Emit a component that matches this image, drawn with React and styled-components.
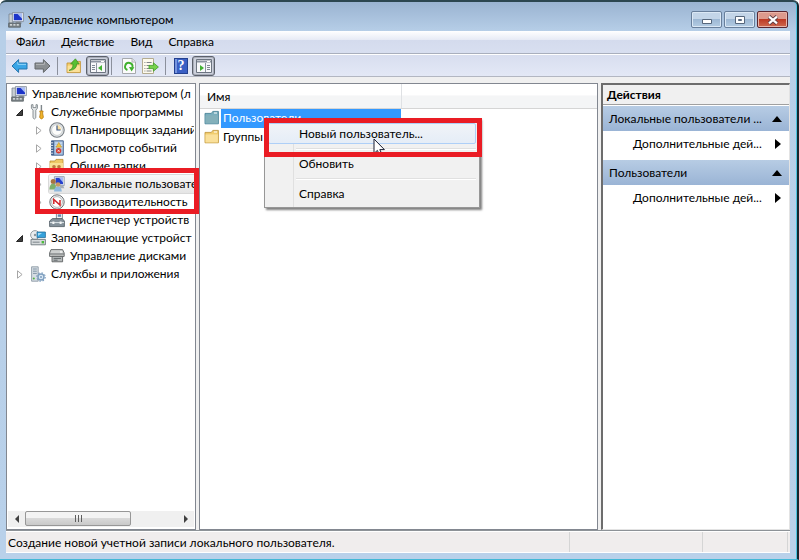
import { useState } from "react";
import styled, { createGlobalStyle, css } from "styled-components";

const ComputerIcon = () => (
	<svg width="16" height="16" viewBox="0 0 16 16">
		<path d="M1 2h4v9H1z" fill="#c9cfd4" stroke="#6f7a84" strokeWidth=".7" />
		<path d="M4.4.6h11v9h-11z" fill="#e6ebf2" stroke="#7c8793" strokeWidth=".8" />
		<path d="M5.8 1.8h8.2v6.4H5.8z" fill="#1d35c9" />
		<path d="M9.4 1.8H14v5z" fill="#a9bdf6" />
		<path d="M8 9.8h5l1 1.6H7z" fill="#8b949c" />
		<path d="M.6 11.2h11.8v4H.6z" fill="#7d8589" stroke="#4c5357" strokeWidth=".7" />
		<path d="M2 12.8h2M5.4 12.8h2M8.8 12.8h2" stroke="#e9eef0" strokeWidth="1.2" />
	</svg>
);

const ToolsIcon = () => (
	<svg width="16" height="16" viewBox="0 0 16 16">
		<path
			d="M1.4.8v3.4L3 6.2v7.6q1.4 2.4 2.8 0V6.2l1.6-2V.8L6 .6v3H3V.6z"
			fill="#e4e8ea"
			stroke="#7f878b"
			strokeWidth=".9"
		/>
		<path d="M11.4 1v6" stroke="#7f878b" strokeWidth="1.4" />
		<path d="M9.7 7h3.4l-.5 2 .8 4.4q-1.9 3-3.8 0l.8-4.4z" fill="#f0b429" stroke="#b57a10" strokeWidth=".8" />
	</svg>
);

const ClockIcon = () => (
	<svg width="16" height="16" viewBox="0 0 16 16">
		<circle cx="8" cy="8" r="7.2" fill="#e6e9eb" stroke="#777d82" strokeWidth="1.1" />
		<circle cx="8" cy="8" r="5.4" fill="#fdfdfb" stroke="#b9bec2" strokeWidth=".7" />
		<path d="M8 3v5h4V8A4.6 4.6 0 0 0 8 3z" fill="#f7dda2" />
		<path d="M8 3.4V8h3.6" fill="none" stroke="#3f5a86" strokeWidth="1.2" />
	</svg>
);

const EventIcon = () => (
	<svg width="16" height="16" viewBox="0 0 16 16">
		<path d="M2.5.8h11.8v14.4H2.5z" fill="#a8c4e4" stroke="#4c6791" strokeWidth="1" />
		<path d="M2.6 1h2.6v14H2.6z" fill="#42618f" />
		<path d="M1.2 2.8h3M1.2 5.4h3M1.2 8h3M1.2 10.6h3M1.2 13.2h3" stroke="#dde5ee" strokeWidth="1" />
		<path d="M6.2 3h7M6.2 5.4h7M6.2 7.8h7" stroke="#d9e5f2" strokeWidth="1" />
		<path d="m9.8 2.4 2.8 4.8H7z" fill="#f5c43c" stroke="#b98718" strokeWidth=".5" />
		<circle cx="9.6" cy="10.8" r="2.7" fill="#d5382d" />
		<path d="m8.6 9.8 2 2m0-2-2 2" stroke="#fff" strokeWidth=".8" />
	</svg>
);

const SharedIcon = () => (
	<svg width="16" height="16" viewBox="0 0 16 16">
		<path d="M1 3h5l1-1.6h7V13H1z" fill="#eec765" stroke="#ba8d32" strokeWidth=".8" />
		<path d="M1 5h13v8H1z" fill="#f8df94" />
		<circle cx="5" cy="8.8" r="1.8" fill="#b9793f" />
		<circle cx="10" cy="8.8" r="1.8" fill="#b9793f" />
		<path d="M2 14.6q3-6 6 0zM7 14.6q3-6 6 0z" fill="#4f9b51" />
	</svg>
);

const UsersIcon = () => (
	<svg width="16" height="16" viewBox="0 0 16 16">
		<path d="M5.4.6h9.8v9H5.4z" fill="#e6ebf2" stroke="#8793a4" strokeWidth=".8" />
		<path d="M6.6 1.8H14v6.4H6.6z" fill="#2440cc" />
		<path d="M10 1.8h4v4.6z" fill="#a5b8f4" />
		<path d="M10.4 9.8h3.8l1.2 2.4h-4z" fill="#a6adb6" />
		<circle cx="4.2" cy="5.4" r="2.5" fill="#a87440" />
		<path d="M.4 13.4q.2-5.8 3.8-5.6 3 0 3 5.6z" fill="#7db06a" />
		<circle cx="9" cy="8.6" r="2.4" fill="#c99a62" />
		<path d="M5 15.4q.4-5 4-4.8 3.4 0 3.8 4.8z" fill="#8fb8dc" />
	</svg>
);

const PerfIcon = () => (
	<svg width="16" height="16" viewBox="0 0 16 16">
		<circle cx="8" cy="8" r="7.2" fill="#f2f2f2" stroke="#6d7175" strokeWidth="1" />
		<circle cx="8" cy="8" r="5.4" fill="#fff" stroke="#9ba0a4" strokeWidth=".7" />
		<path d="M4.8 10V5.4L11 11V6" fill="none" stroke="#d3262b" strokeWidth="1.5" />
	</svg>
);

const DeviceIcon = () => (
	<svg width="16" height="16" viewBox="0 0 16 16">
		<path d="M7.4 1h6v6h-6z" fill="#eef1f3" stroke="#77838c" strokeWidth=".9" />
		<path d="M8.8 2.4H12v2.4H8.8z" fill="#6389b0" />
		<path d="M3.4 6.6h9.8L15.4 9v5.6H.6V9z" fill="#84919a" stroke="#4d5961" strokeWidth=".8" />
		<path d="M1 10.6h14" stroke="#dbe3e6" strokeWidth="1" />
		<path d="M3.4 9.6h2v2.4h-2zM10.6 9.6h2v2.4h-2z" fill="#f3f5f5" />
	</svg>
);

const StorageIcon = () => (
	<svg width="16" height="16" viewBox="0 0 16 16">
		<circle cx="5" cy="5" r="4.4" fill="#e9ecee" stroke="#8c959b" strokeWidth=".9" />
		<circle cx="5" cy="5" r="1.2" fill="#8b959c" />
		<path d="M7 2h8.4v5.6H7z" fill="#35a2dc" stroke="#266f9a" strokeWidth=".8" />
		<path d="M8 3h4L8 6z" fill="#a4dcf7" />
		<path d="M1 9.4h14.4v5.4H1z" fill="#d6dadc" stroke="#6d777d" strokeWidth=".9" />
		<path d="M2.6 12.2h7" stroke="#8b9398" strokeWidth="1.2" />
		<path d="M11.6 11h2.4v2.4h-2.4z" fill="#4cbb3c" />
	</svg>
);

const DiskIcon = () => (
	<svg width="16" height="16" viewBox="0 0 16 16">
		<path d="M2 1.6h11.6L15.2 5v3.4H.6V5z" fill="#cdd0cf" stroke="#5d6263" strokeWidth=".9" />
		<path d="M1 6h14" stroke="#666b6c" strokeWidth="1" />
		<path d="M3 8.4h10.6v5.4H3z" fill="#b6babb" stroke="#5d6263" strokeWidth=".9" />
		<path d="M4.6 10.4h7.4M4.6 12.2h4" stroke="#62686a" strokeWidth="1" />
		<path d="M11 4h2.2" stroke="#fff" strokeWidth="1.2" />
	</svg>
);

const ServicesIcon = () => (
	<svg width="16" height="16" viewBox="0 0 16 16">
		<path d="M1.6.8h6.6v14.4H1.6z" fill="#d6dde3" stroke="#8c9aa6" strokeWidth=".9" />
		<path d="M3 3h3.8M3 5.2h3.8M3 7.4h3.8" stroke="#8295a6" strokeWidth="1" />
		<circle cx="3.8" cy="12.6" r="1" fill="#4fb13e" />
		<circle cx="11" cy="11" r="3" fill="#dbe8f4" stroke="#7f9fbf" strokeWidth="1.4" />
		<circle cx="11" cy="11" r="4.2" fill="none" stroke="#7f9fbf" strokeWidth="1.2" strokeDasharray="1.5 1.8" />
		<circle cx="11" cy="11" r="1" fill="#7f9fbf" />
	</svg>
);

const FolderIcon = ({ selected }) => (
	<svg width="16" height="16" viewBox="0 0 16 16">
		<path
			d="M1 3.4h6.4l1.4-2h5.6v12.4H1z"
			fill={selected ? "#79aebd" : "#f1cc6d"}
			stroke={selected ? "#4a8499" : "#c39a42"}
			strokeWidth=".9"
		/>
		<path d="M1.5 5.4h12.4v8H1.5z" fill={selected ? "#83b0ba" : "#fae09a"} />
		<path d="M10 3h3" stroke="#fff" strokeWidth="1" />
	</svg>
);

const ArrowIcon = ({ forward }) => (
	<svg width="17" height="16" viewBox="0 0 17 16">
		<path
			d={forward ? "M16 8 9.4 1.6V5H1v6h8.4v3.4z" : "M1 8l6.6-6.4V5H16v6H7.6v3.4z"}
			fill={forward ? "#8b8f92" : "#39a5e6"}
			stroke={forward ? "#64686b" : "#2474ad"}
			strokeLinejoin="round"
		/>
		<path d={forward ? "M2 6.4h8.4V4" : "M15 6.4H6.8V4"} fill="none" stroke={forward ? "#b3b6b8" : "#8fd4f8"} />
	</svg>
);

const UpIcon = () => (
	<svg width="16" height="16" viewBox="0 0 16 16">
		<path d="M1 5h5l1-1.6h7.4v11.2H1z" fill="#f3cd6c" stroke="#c4963a" strokeWidth=".9" />
		<path d="M1.6 7.6h12.2V14H1.6z" fill="#fbe098" />
		<path d="M3 12.4Q7.2 11 7 6H4.6L9.4.8l3.8 5.2h-2.6Q10.8 12 3 12.4z" fill="#58c033" stroke="#3b8c21" strokeWidth=".7" />
	</svg>
);

const PaneIcon = ({ right }) => (
	<svg width="16" height="14" viewBox="0 0 16 14">
		<path d="M.5.5h15v13H.5z" fill="#f7f8fa" stroke="#6c7480" />
		<path d="M1 2.5h14" stroke="#8c94a1" strokeWidth="2" />
		<path d="M11 2.5h3" stroke="#fff" />
		<path d={right ? "M9.5 4v9" : "M6.5 4v9"} stroke="#8c94a1" />
		<path d={right ? "M11 6.5h3M11 8.5h3M11 10.5h3" : "M2 6.5h3M2 8.5h3M2 10.5h3"} stroke="#7e8793" />
		<path d={right ? "M4 6v6l4-3z" : "M12 6v6L8 9z"} fill="#42b133" />
	</svg>
);

const RefreshIcon = () => (
	<svg width="14" height="16" viewBox="0 0 14 16">
		<path d="M.5.5h9.6l3.4 3.4v11.6H.5z" fill="#fbfbfb" stroke="#a6a9ad" />
		<path d="M10 .8v3.3h3.2" fill="#e4e5e7" stroke="#a6a9ad" strokeWidth=".8" />
		<path d="M5.4 12A3.7 3.7 0 1 1 10.4 9.4" fill="none" stroke="#3fb02e" strokeWidth="1.9" />
		<path d="m7 9 5.4.2-2.8 4.2z" fill="#3fb02e" />
	</svg>
);

const ExportIcon = () => (
	<svg width="17" height="16" viewBox="0 0 17 16">
		<path d="M.5.5h11v15H.5z" fill="#fdfaec" stroke="#b4ac90" />
		<path d="M2.4 4.5h1M4.6 4.5h5M2.4 7.5h1M4.6 7.5h3M2.4 10.5h1M4.6 10.5h3M2.4 13h1M4.6 13h5" stroke="#80848a" />
		<path d="M7 7.4h4.4V4.8L16.4 9l-5 4.2v-2.6H7z" fill="#77d24b" stroke="#409e28" strokeWidth=".8" />
	</svg>
);

const CursorIcon = () => (
	<svg width="13" height="20" viewBox="0 0 13 20">
		<path d="M1 1v14.4l3.4-3 2.4 5.4 2.4-1-2.4-5.2h4.6z" fill="#fff" stroke="#1a1f33" />
	</svg>
);

const MENU = ["Файл", "Действие", "Вид", "Справка"];

const TREE = [
	{ text: "Управление компьютером (л", level: 0, icon: ComputerIcon },
	{ text: "Служебные программы", level: 1, icon: ToolsIcon, state: "open" },
	{ text: "Планировщик заданий", level: 2, icon: ClockIcon, state: "closed" },
	{ text: "Просмотр событий", level: 2, icon: EventIcon, state: "closed" },
	{ text: "Общие папки", level: 2, icon: SharedIcon, state: "closed" },
	{ text: "Локальные пользовате", level: 2, icon: UsersIcon, state: "closed", active: true },
	{ text: "Производительность", level: 2, icon: PerfIcon, state: "closed" },
	{ text: "Диспетчер устройств", level: 2, icon: DeviceIcon },
	{ text: "Запоминающие устройст", level: 1, icon: StorageIcon, state: "open" },
	{ text: "Управление дисками", level: 2, icon: DiskIcon },
	{ text: "Службы и приложения", level: 1, icon: ServicesIcon, state: "closed" },
];

const ACTIONS = ["Локальные пользователи ...", "Пользователи"];

const App = () => {
	const [selected, setSelected] = useState("Пользователи");

	return (
		<>
			<GlobalStyle />
			<Window>
				<TitleBar>
					<ComputerIcon />
					<Title>Управление компьютером</Title>
					<WinButton aria-label="Свернуть">
						<svg width="12" height="12" viewBox="0 0 12 12">
							<path d="M1.5 5.5h9v4h-9z" fill="#fff" stroke="#56677c" />
						</svg>
					</WinButton>
					<WinButton aria-label="Развернуть">
						<svg width="12" height="12" viewBox="0 0 12 12">
							<path d="M1.5 2.5h9v7h-9z" fill="#fff" stroke="#56677c" />
							<path d="M4.5 5.5h3v1h-3z" fill="#8fa9c6" stroke="#56677c" />
						</svg>
					</WinButton>
					<WinButton $close aria-label="Закрыть">
						<svg width="12" height="12" viewBox="0 0 12 12">
							<path d="m2 2.6 8 6.8m0-6.8L2 9.4" stroke="#5b3a41" strokeWidth="4" />
							<path d="m2 2.6 8 6.8m0-6.8L2 9.4" stroke="#fff" strokeWidth="2.2" />
						</svg>
					</WinButton>
				</TitleBar>

				<Client>
					<MenuBar>
						{MENU.map(item => (
							<MenuButton key={item}>{item}</MenuButton>
						))}
					</MenuBar>

					<ToolBar>
						<Tool aria-label="Назад">
							<ArrowIcon />
						</Tool>
						<Tool aria-label="Вперед">
							<ArrowIcon forward />
						</Tool>
						<ToolLine />
						<Tool aria-label="Вверх">
							<UpIcon />
						</Tool>
						<Tool $pressed aria-label="Дерево консоли">
							<PaneIcon />
						</Tool>
						<ToolLine $tight />
						<Tool aria-label="Обновить">
							<RefreshIcon />
						</Tool>
						<Tool aria-label="Экспорт списка">
							<ExportIcon />
						</Tool>
						<ToolLine />
						<HelpTool aria-label="Справка">?</HelpTool>
						<Tool $pressed aria-label="Панель действий">
							<PaneIcon right />
						</Tool>
					</ToolBar>

					<Panes>
						<TreePane>
							<Tree>
								{TREE.map(({ text, level, icon: Icon, state, active }) => (
									<TreeRow key={text} $level={level}>
										<Toggle $root={level === 0}>
											{state === "open" && (
												<svg width="7" height="7" viewBox="0 0 7 7">
													<path d="M6.5.5v6h-6z" fill="#404040" stroke="#262626" />
												</svg>
											)}
											{state === "closed" && (
												<svg width="7" height="9" viewBox="0 0 7 9">
													<path d="M1.5.8v7.4l4.6-3.7z" fill="#fff" stroke="#a6a6a6" />
												</svg>
											)}
										</Toggle>
										<TreeLabel $active={active}>
											<Icon />
											{text}
										</TreeLabel>
									</TreeRow>
								))}
							</Tree>
							<ScrollBar>
								<ScrollArrow aria-label="Влево">
									<svg width="4" height="8" viewBox="0 0 4 8">
										<path d="M4 0v8L0 4z" fill="#404040" />
									</svg>
								</ScrollArrow>
								<ScrollTrack>
									<ScrollThumb>
										<svg width="9" height="7" viewBox="0 0 9 7">
											<path d="M1.5 0v7M4.5 0v7M7.5 0v7" stroke="#5e5e5e" />
										</svg>
									</ScrollThumb>
								</ScrollTrack>
								<ScrollArrow aria-label="Вправо">
									<svg width="4" height="8" viewBox="0 0 4 8">
										<path d="M0 0v8l4-4z" fill="#404040" />
									</svg>
								</ScrollArrow>
							</ScrollBar>
							<TreeMark />
						</TreePane>

						<ListPane>
							<Table>
								<thead>
									<tr>
										<HeadCell $name>Имя</HeadCell>
										<HeadCell />
									</tr>
								</thead>
								<tbody>
									{["Пользователи", "Группы"].map(name => (
										<tr key={name}>
											<Cell>
												<FileRow onClick={() => setSelected(name)}>
													<FolderIcon selected={selected === name} />
													<FileName $selected={selected === name}>{name}</FileName>
												</FileRow>
											</Cell>
											<Cell />
										</tr>
									))}
								</tbody>
							</Table>

							<Popup>
								<PopupItem $hot>Новый пользователь...</PopupItem>
								<PopupLine />
								<PopupItem>Обновить</PopupItem>
								<PopupLine />
								<PopupItem>Справка</PopupItem>
								<PopupMark />
								<Pointer>
									<CursorIcon />
								</Pointer>
							</Popup>
						</ListPane>

						<ActionPane>
							<ActionTitle>Действия</ActionTitle>
							{ACTIONS.map(title => (
								<ActionGroup key={title}>
									<ActionHead>
										{title}
										<svg width="10" height="6" viewBox="0 0 10 6">
											<path d="M0 6 5 0l5 6z" />
										</svg>
									</ActionHead>
									<ActionItem>
										Дополнительные дей...
										<svg width="6" height="10" viewBox="0 0 6 10">
											<path d="M0 0v10l6-5z" />
										</svg>
									</ActionItem>
								</ActionGroup>
							))}
						</ActionPane>
					</Panes>

					<StatusBar>
						<StatusText>Создание новой учетной записи локального пользователя.</StatusText>
						<StatusCell $wide />
						<StatusCell />
					</StatusBar>
				</Client>
			</Window>
		</>
	);
};

export default App;

const GlobalStyle = createGlobalStyle`
	* {
		box-sizing: border-box;
	}
	body {
		margin: 0;
		background-color: #fff;
		font-family: Lato, "Noto Sans", sans-serif;
		font-size: 12px;
		line-height: 18px;
		color: #000;
	}
	button {
		margin: 0;
		padding: 0;
		border: 0;
		background: none;
		font: inherit;
		color: inherit;
		white-space: nowrap;
	}
	svg {
		display: block;
		flex: none;
	}
`;

const Window = styled.div`
	display: flex;
	flex-direction: column;
	min-height: 100vh;
	padding: 0 7px 6px 6px;
	border-top: 2px solid #2c4650;
	border-right: 2px solid #16262e;
	border-bottom: 1px solid #43b8d6;
	border-radius: 6px 6px 0 0;
	background: linear-gradient(#9ab3d1, #b7cfe8 30px, #b9d1ea);
	box-shadow: inset -1px 0 #4cc3de;
`;

const TitleBar = styled.header`
	display: flex;
	align-items: center;
	gap: 2px;
	height: 29px;
	padding: 6px 2px 0;
`;

const Title = styled.h1`
	flex: 1;
	margin: 0 0 0 2px;
	font-size: 12px;
	font-weight: 400;
`;

const WinButton = styled.button`
	display: flex;
	align-items: center;
	justify-content: center;
	align-self: flex-start;
	width: 31px;
	height: 17px;
	margin-top: 3px;
	border: 1px solid #687f9b;
	border-radius: 2px;
	background: linear-gradient(#c3d5e8 45%, #9db8d4 50%, #b4cce3);
	box-shadow: inset 0 0 0 1px #dbe8f5;
	${({ $close }) =>
		$close &&
		css`
			border-color: #5a2630;
			background: linear-gradient(#dd9a8d 45%, #bd3a25 50%, #cf6a50);
			box-shadow: inset 0 0 0 1px #e8b5aa;
		`}
`;

const Client = styled.main`
	display: flex;
	flex: 1;
	flex-direction: column;
	background-color: #f0f0f0;
`;

const MenuBar = styled.nav`
	display: flex;
	gap: 16px;
	height: 23px;
	padding: 2px 10px;
	border-bottom: 1px solid #a9afbd;
	background: linear-gradient(#fff, #e6eaf5 9px, #d4dbed 9px, #d8dff0);
`;

const MenuButton = styled.button``;

const ToolBar = styled.div`
	display: flex;
	align-items: center;
	gap: 6px;
	height: 23px;
	padding: 0 5px;
	border-top: 1px solid #fff;
	border-bottom: 1px solid #b3b7c2;
	background: linear-gradient(#d8deef, #e3e8f6);
`;

const Tool = styled.button`
	display: flex;
	align-items: center;
	justify-content: center;
	${({ $pressed }) =>
		$pressed &&
		css`
			width: 23px;
			height: 20px;
			margin-left: -2px;
			border: 1px solid #5c616b;
			border-radius: 3px;
			background-color: #cdd1dc;
			box-shadow: inset 0 0 0 1px #a8adb9;
		`}
`;

const HelpTool = styled.button`
	width: 14px;
	height: 16px;
	border: 1px solid #23408f;
	background: linear-gradient(90deg, #7795de 2px, #3a5fc4 2px);
	color: #fff;
	font-family: "Liberation Serif", serif;
	font-size: 14px;
	font-weight: 700;
	line-height: 14px;
	text-align: center;
`;

const ToolLine = styled.span`
	width: 1px;
	height: 18px;
	margin-right: ${({ $tight }) => ($tight ? "4px" : "2px")};
	margin-left: ${({ $tight }) => ($tight ? "-4px" : "0")};
	background-color: #8b909c;
`;

const Panes = styled.div`
	display: grid;
	grid-template-columns: minmax(0, 190fr) minmax(0, 399fr) minmax(0, 189fr);
	flex: 1;
	gap: 3px;
	padding-top: 6px;
	border-bottom: 1px solid #8d9297;
`;

const TreePane = styled.section`
	position: relative;
	display: flex;
	flex-direction: column;
	border: 1px solid #828790;
	background-color: #fff;
`;

const Tree = styled.ul`
	flex: 1;
	margin: 0 1px 0 0;
	padding: 1px 0 0 4px;
	overflow: hidden;
	list-style: none;
`;

const TreeRow = styled.li`
	display: flex;
	align-items: center;
	height: 18px;
	padding-left: ${({ $level }) => ($level ? ($level - 1) * 19 + 5 : 0)}px;
`;

const Toggle = styled.span`
	display: ${({ $root }) => ($root ? "none" : "block")};
	flex: none;
	width: 14px;
`;

const TreeLabel = styled.button`
	display: flex;
	flex: 1;
	align-items: center;
	gap: 5px;
	height: 18px;
	${({ $active }) =>
		$active &&
		css`
			border-radius: 2px;
			background: linear-gradient(#f8f8f8, #e5e5e5);
			box-shadow: 0 0 0 1px #d9d9d9;
		`}
`;

const ScrollBar = styled.div`
	display: flex;
	height: 16px;
	margin: 0 1px 2px;
	background-color: #f0f0f0;
`;

const ScrollArrow = styled.button`
	display: flex;
	align-items: center;
	justify-content: center;
	width: 17px;
`;

const ScrollTrack = styled.div`
	flex: 1;
`;

const ScrollThumb = styled.div`
	display: flex;
	align-items: center;
	justify-content: center;
	width: 70%;
	height: 15px;
	border: 1px solid #979797;
	border-radius: 2px;
	background: linear-gradient(#f3f3f3 45%, #d9d9d9 50%, #c9c9c9);
`;

const ListPane = styled.section`
	position: relative;
	border: 1px solid #828790;
	background-color: #fff;
`;

const Table = styled.table`
	width: 100%;
	border-collapse: collapse;
	table-layout: fixed;
`;

const HeadCell = styled.th`
	width: ${({ $name }) => ($name ? "201px" : "auto")};
	height: 24px;
	padding: 2px 7px 0;
	border-right: ${({ $name }) => ($name ? "1px solid #dfe1e4" : "0")};
	border-bottom: 1px solid #d5d5d5;
	background: linear-gradient(#fff 45%, #f4f5f6 50%);
	font-weight: 400;
	text-align: left;
`;

const Cell = styled.td`
	padding: 0 0 0 4px;
`;

const FileRow = styled.button`
	display: flex;
	align-items: center;
	gap: 1px;
	width: 100%;
	height: 19px;
	text-align: left;
`;

const FileName = styled.span`
	flex: 1;
	height: 19px;
	padding-left: 2px;
	background-color: ${({ $selected }) => ($selected ? "#3399ff" : "transparent")};
	color: ${({ $selected }) => ($selected ? "#fff" : "#000")};
`;

const Popup = styled.div`
	position: absolute;
	top: 34px;
	left: 64px;
	width: 216px;
	padding: 4px 3px 3px;
	border: 1px solid #979797;
	background: linear-gradient(90deg, #f1f1f1 28px, #e0e0e0 28px, #e0e0e0 29px, #f1f1f1 29px);
	box-shadow: 2px 2px 2px rgba(0, 0, 0, 0.5);
`;

const PopupItem = styled.button`
	display: block;
	width: 100%;
	height: 21px;
	padding-left: 30px;
	border: 1px solid ${({ $hot }) => ($hot ? "#aecff7" : "transparent")};
	border-radius: 2px;
	background: ${({ $hot }) => ($hot ? "linear-gradient(#f0f3f8, #e5edf7)" : "none")};
	line-height: 17px;
	text-align: left;
`;

const PopupLine = styled.div`
	height: 2px;
	margin: 4px 0 3px 28px;
	border-top: 1px solid #e0e0e0;
	background-color: #fff;
`;

const Pointer = styled.div`
	position: absolute;
	top: 19px;
	left: 108px;
	height: 14px;
	overflow: hidden;
`;

const PopupMark = styled.div`
	position: absolute;
	top: -1px;
	left: -1px;
	width: 218px;
	height: 39px;
	border: 5px solid #ea1c24;
	pointer-events: none;
`;

const TreeMark = styled.div`
	position: absolute;
	top: 84px;
	right: -4px;
	left: 28px;
	z-index: 1;
	height: 46px;
	border: 5px solid #ea1c24;
	pointer-events: none;
`;

const ActionPane = styled.aside`
	border-top: 2px solid #6d6d6d;
	border-left: 2px solid #6d6d6d;
	border-right: 1px solid #e3e3e3;
	border-bottom: 1px solid #e3e3e3;
	background-color: #fff;
`;

const ActionTitle = styled.h2`
	margin: 0 0 1px;
	padding: 1px 4px 0;
	border-bottom: 1px solid #a0a0a0;
	background-color: #f0f0f0;
	font-size: 12px;
	font-weight: 700;
	line-height: 18px;
`;

const ActionGroup = styled.div`
	padding-bottom: 4px;
`;

const ActionHead = styled.button`
	display: flex;
	align-items: center;
	justify-content: space-between;
	width: 100%;
	height: 25px;
	padding: 0 7px 0 6px;
	background: linear-gradient(#b7cce4, #9ab4d5);
`;

const ActionItem = styled.button`
	display: flex;
	align-items: center;
	justify-content: space-between;
	width: 100%;
	height: 25px;
	padding: 0 8px 0 30px;
`;

const StatusBar = styled.footer`
	display: flex;
	height: 22px;
	padding-right: 2px;
	border-top: 1px solid #fff;
	border-bottom: 1px solid #fff;
	background-color: #f0eded;
`;

const StatusText = styled.div`
	flex: 1;
	padding: 2px 2px 0;
	border-right: 1px solid #d5d5d5;
`;

const StatusCell = styled.div`
	width: ${({ $wide }) => ($wide ? "133px" : "85px")};
	border-right: 1px solid #d5d5d5;
`;
